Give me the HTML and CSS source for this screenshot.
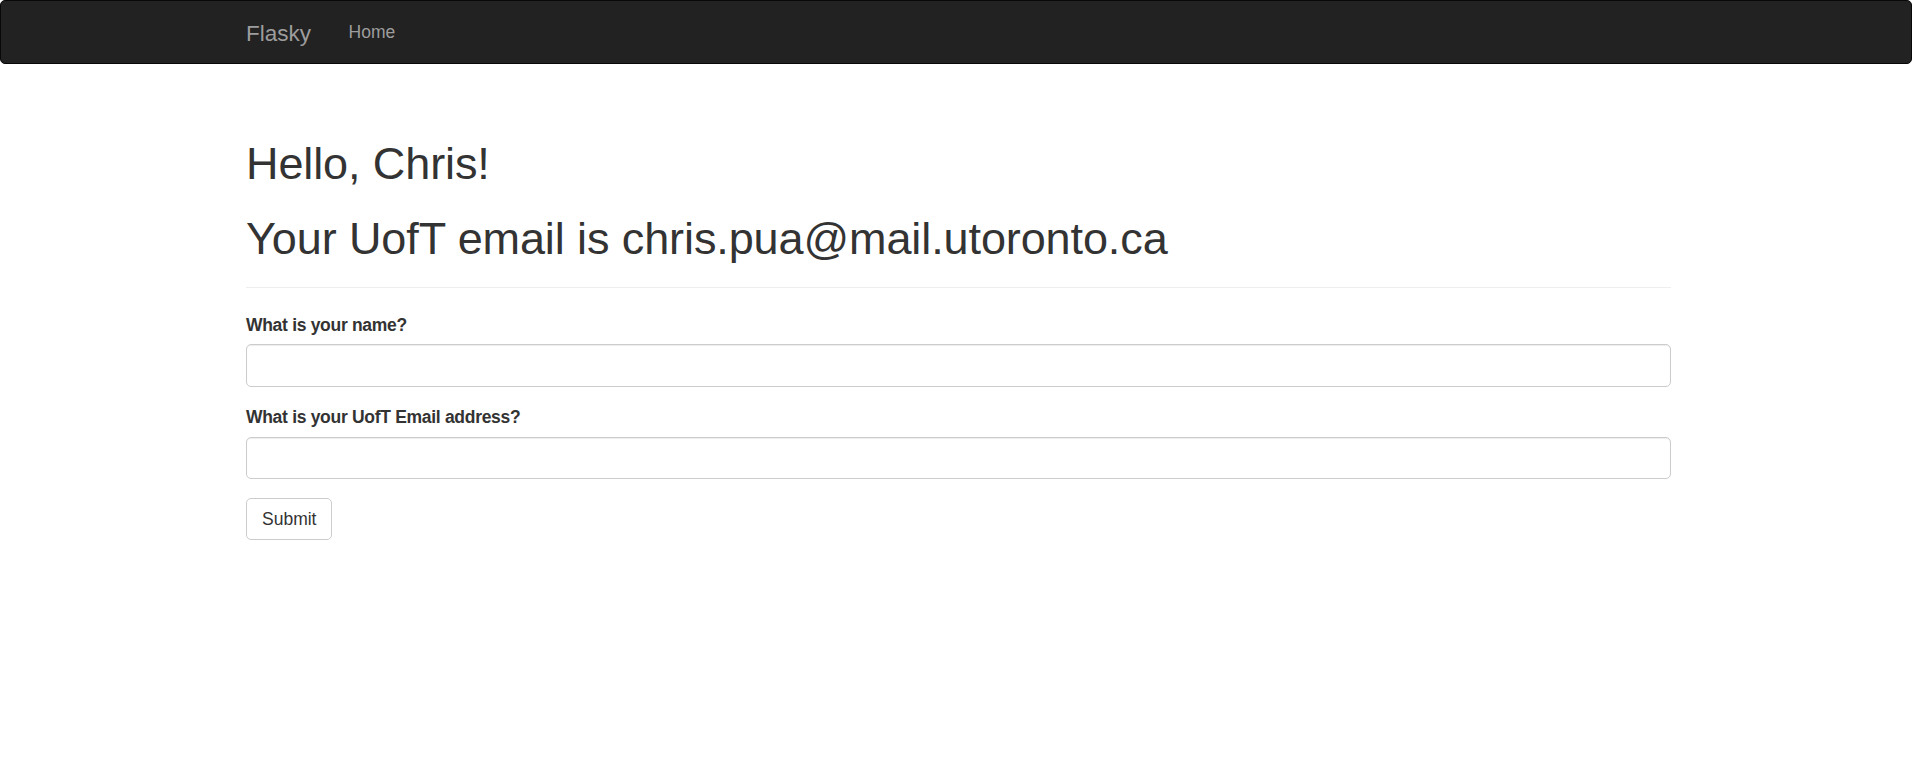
FILE: index.html
```html
<!DOCTYPE html>
<html lang="en">
<head>
<meta charset="utf-8">
<title>Flasky</title>
<link rel="stylesheet" href="styles.css">
</head>
<body>
<div class="navbar">
  <div class="container nav-inner">
    <a class="brand" href="#">Flasky</a>
    <ul class="nav">
      <li><a href="#">Home</a></li>
    </ul>
  </div>
</div>
<div class="container main">
  <div class="page-header">
    <h1>Hello, Chris!</h1>
    <h1>Your UofT email is chris.pua@mail.utoronto.ca</h1>
  </div>
  <form class="form">
    <div class="form-group">
      <label class="label" for="name">What is your name?</label>
      <input class="input" id="name" type="text">
    </div>
    <div class="form-group">
      <label class="label" for="email">What is your UofT Email address?</label>
      <input class="input" id="email" type="text">
    </div>
    <button class="btn" type="button">Submit</button>
  </form>
</div>
</body>
</html>
```

FILE: styles.css
```css
* { box-sizing: border-box; }
html, body { margin: 0; padding: 0; }
body {
  font-family: "Liberation Sans", Arial, Helvetica, sans-serif;
  font-size: 17.5px;
  line-height: 25px;
  color: #333;
  background: #fff;
}
.navbar {
  background: #222;
  border: 1px solid #080808;
  border-radius: 5px;
  min-height: 64px;
  margin-bottom: 25px;
}
.container {
  width: 1462.5px;
  margin: 0 auto;
  padding: 0 18.75px;
  position: relative;
  left: 2.5px;
}
.nav-inner {
  display: flex;
  align-items: flex-start;
}
.brand {
  display: block;
  height: 62px;
  padding: 20px 18.75px 17px;
  margin-left: -18.75px;
  font-size: 22.5px;
  line-height: 25px;
  color: #9d9d9d;
  text-decoration: none;
}
.nav {
  list-style: none;
  margin: 0;
  padding: 0;
  display: flex;
}
.nav a {
  display: block;
  padding: 18.5px 18.75px;
  line-height: 25px;
  color: #9d9d9d;
  text-decoration: none;
}
.main {
  padding-top: 50px;
}
.page-header {
  padding-bottom: 11.25px;
  border-bottom: 1px solid #eee;
  margin-bottom: 25px;
}
h1 {
  font-size: 45px;
  font-weight: 500;
  line-height: 49.5px;
  margin: 25px 0 12.5px;
  letter-spacing: -0.1px;
}
.page-header h1:first-child { margin-top: 0; }
.form-group {
  margin-bottom: 18.75px;
}
.label {
  display: block;
  font-weight: 700;
  letter-spacing: -0.3px;
  margin-bottom: 6.25px;
}
.input {
  display: block;
  width: 100%;
  height: 42.5px;
  padding: 7.5px 15px;
  font: inherit;
  color: #555;
  background: #fff;
  border: 1px solid #ccc;
  border-radius: 5px;
  box-shadow: inset 0 1px 1px rgba(0,0,0,.075);
}
.btn {
  display: inline-block;
  height: 42.5px;
  padding: 7.5px 15px;
  font: inherit;
  color: #333;
  background: #fff;
  border: 1px solid #ccc;
  border-radius: 5px;
  cursor: pointer;
}
```
